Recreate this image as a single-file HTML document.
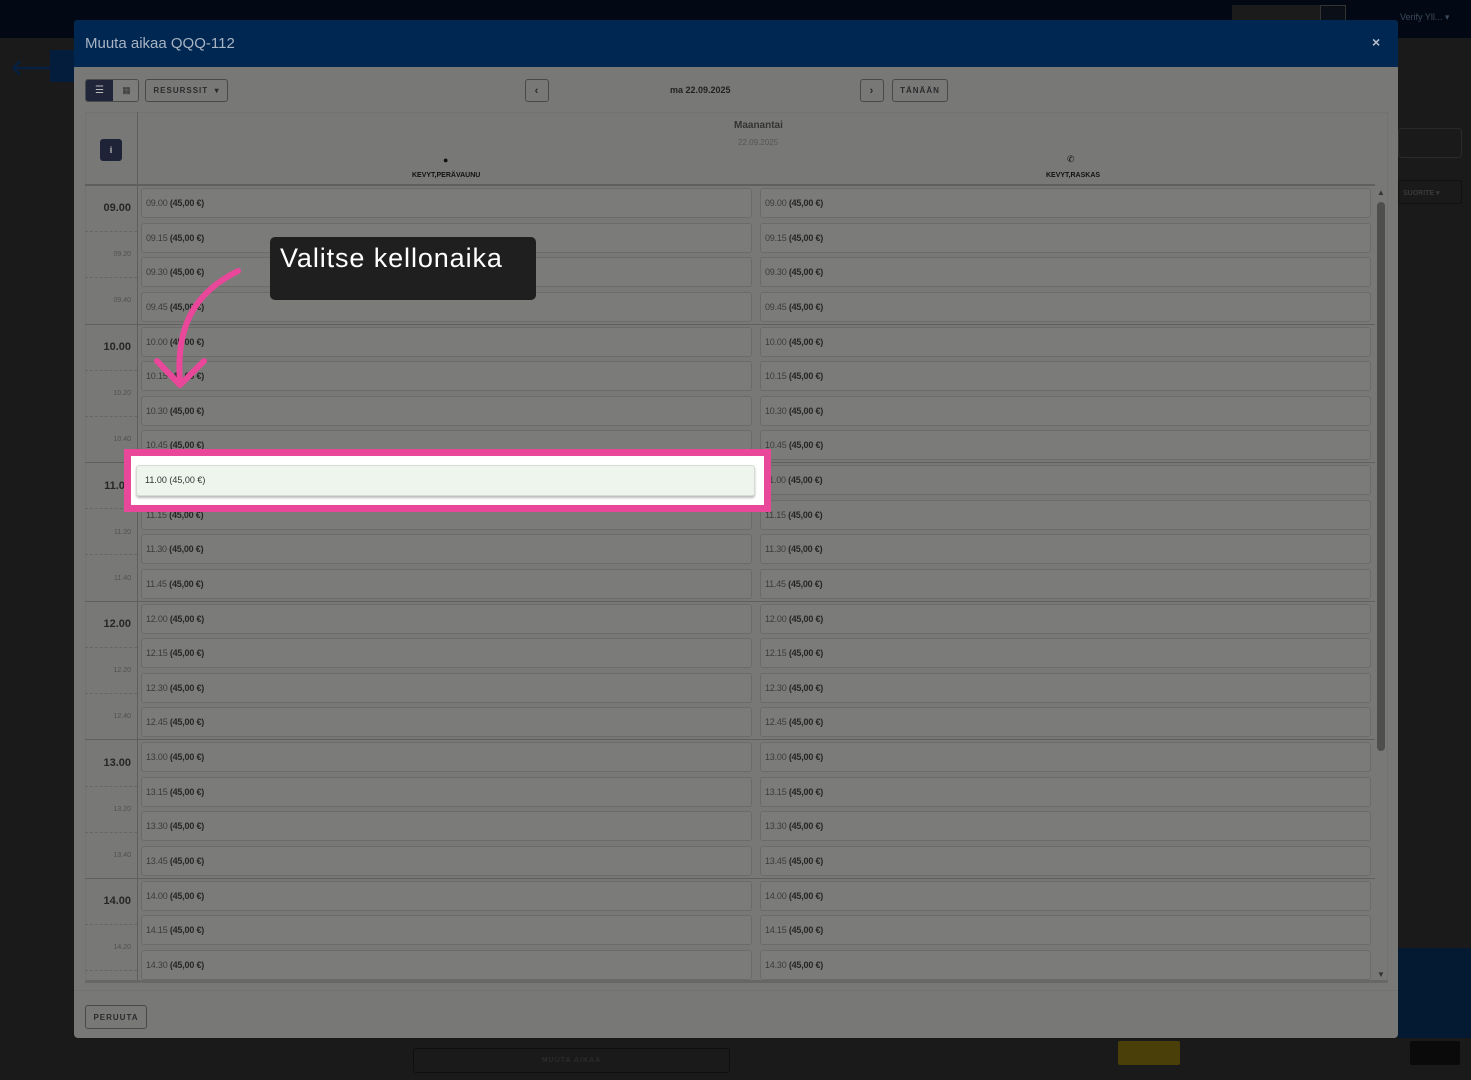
<!DOCTYPE html>
<html><head><meta charset="utf-8">
<style>
*{box-sizing:border-box;margin:0;padding:0}
body{width:1471px;height:1080px;overflow:hidden;background:#1a1a1b;font-family:"Liberation Sans",sans-serif;position:relative}
.a{position:absolute}
.nav{left:0;top:0;width:1471px;height:38px;background:#020914}
.modal{left:74px;top:20px;width:1324px;height:1018px;background:#787977;border-radius:4px;overflow:hidden}
.hdr{left:0;top:0;width:1324px;height:47px;background:#002752}
.btn{border:1px solid #48494b;border-radius:3px;font-size:8px;font-weight:bold;letter-spacing:1px;color:#2a2b2d;display:flex;align-items:center;justify-content:center}
.rows{display:flex;flex-direction:column}
.r{height:30px;margin-bottom:4.64px;border:1px solid #6b6c6a;border-radius:3px;background:#7b7c7a;font-size:9px;color:#3a3b3a;padding-left:4px;line-height:28px;white-space:nowrap;letter-spacing:-0.2px}
.r b{color:#262626}
.hl{font-size:11px;font-weight:bold;color:#262626;width:46px;text-align:right}
.sl{font-size:7px;color:#505050;width:46px;text-align:right}
</style></head><body>
<div class="a nav"></div>
<div class="a" style="left:1232px;top:5px;width:88px;height:22px;background:#1b1b1c"></div>
<div class="a" style="left:1320px;top:5px;width:26px;height:22px;background:#0a0f18;border:1px solid #333"></div>
<div class="a" style="left:1400px;top:12px;color:#3d4a5c;font-size:9px">Verify Yll... ▾</div>
<div class="a" style="left:10px;top:55px;color:#08203f;font-size:22px;font-weight:bold">🡐</div>
<div class="a" style="left:50px;top:50px;width:24px;height:32px;background:#041d3c"></div>
<div class="a" style="left:1398px;top:128px;width:64px;height:30px;border:1px solid #2a2a2a;border-radius:4px"></div>
<div class="a" style="left:1398px;top:180px;width:64px;height:24px;border:1px solid #111;border-radius:3px;color:#3a3a3a;font-size:7px;font-weight:bold;padding:8px 4px">SUORITE ▾</div>
<div class="a" style="left:1398px;top:948px;width:73px;height:90px;background:#041a33"></div>
<div class="a" style="left:1118px;top:1041px;width:62px;height:24px;background:#4a3f08;border-radius:2px"></div>
<div class="a" style="left:1410px;top:1041px;width:50px;height:24px;background:#0a0a0a;border-radius:2px"></div>
<div class="a" style="left:413px;top:1048px;width:317px;height:25px;border:1px solid #0f0f0f;border-radius:3px;font-size:7px;color:#2c2c2c;text-align:center;line-height:24px;font-weight:bold;letter-spacing:1px">MUUTA AIKAA</div>

<div class="a modal">
 <div class="a hdr"><div class="a" style="left:11px;top:15px;color:#a9b4c2;font-size:15px">Muuta aikaa QQQ-112</div><div class="a" style="left:1298px;top:14px;color:#b8bfca;font-size:14px;font-weight:bold">×</div></div>
 <div class="a" style="left:11px;top:59px;width:54px;height:23px;border:1px solid #4a4b4d;border-radius:3px;overflow:hidden">
  <div class="a" style="left:0;top:0;width:27px;height:23px;background:#20253a;color:#bbb;font-size:10px;text-align:center;line-height:21px">☰</div>
  <div class="a" style="left:27px;top:0;width:27px;height:23px;background:#7c7d7b;color:#333;font-size:9px;text-align:center;line-height:21px">▦</div>
 </div>
 <div class="a btn" style="left:71px;top:59px;width:83px;height:23px">RESURSSIT &nbsp;▾</div>
 <div class="a btn" style="left:451px;top:59px;width:24px;height:23px;font-size:11px">‹</div>
 <div class="a" style="left:596px;top:65px;font-size:9px;font-weight:bold;color:#222">ma 22.09.2025</div>
 <div class="a btn" style="left:786px;top:59px;width:24px;height:23px;font-size:11px">›</div>
 <div class="a btn" style="left:818px;top:59px;width:56px;height:23px">TÄNÄÄN</div>
 <div class="a" style="left:11px;top:92px;width:1303px;height:870px;border:1px solid #727371;background:#787977"></div>
 <div class="a" style="left:63px;top:92px;width:1px;height:870px;background:#5e5f5d"></div>
 <div class="a" style="left:26px;top:119px;width:22px;height:22px;background:#1f2338;border-radius:3px;color:#bbb;font-size:9px;font-weight:bold;text-align:center;line-height:22px">i</div>
 <div class="a" style="left:660px;top:100px;font-size:10px;font-weight:bold;color:#333">Maanantai</div>
 <div class="a" style="left:664px;top:118px;font-size:8px;color:#555">22.09.2025</div>
 <div class="a" style="left:369px;top:135px;font-size:9px;color:#111">●</div>
 <div class="a" style="left:338px;top:152px;font-size:7px;font-weight:bold;color:#111">KEVYT,PERÄVAUNU</div>
 <div class="a" style="left:993px;top:134px;font-size:9px;color:#111">✆</div>
 <div class="a" style="left:972px;top:152px;font-size:7px;font-weight:bold;color:#111">KEVYT,RASKAS</div>
 <div class="a" style="left:11px;top:164px;width:1290px;height:2px;background:#5f605e"></div>
 <div class="a" style="left:11px;top:303.6px;width:1290px;height:1px;background:#5f605e"></div>
 <div class="a" style="left:11px;top:442.2px;width:1290px;height:1px;background:#5f605e"></div>
 <div class="a" style="left:11px;top:580.8px;width:1290px;height:1px;background:#5f605e"></div>
 <div class="a" style="left:11px;top:719.4px;width:1290px;height:1px;background:#5f605e"></div>
 <div class="a" style="left:11px;top:858px;width:1290px;height:1px;background:#5f605e"></div>
 <div class="a" style="left:11px;top:211px;width:52px;border-top:1px dashed #666"></div>
 <div class="a" style="left:11px;top:257px;width:52px;border-top:1px dashed #666"></div>
 <div class="a" style="left:11px;top:350px;width:52px;border-top:1px dashed #666"></div>
 <div class="a" style="left:11px;top:396px;width:52px;border-top:1px dashed #666"></div>
 <div class="a" style="left:11px;top:488px;width:52px;border-top:1px dashed #666"></div>
 <div class="a" style="left:11px;top:534px;width:52px;border-top:1px dashed #666"></div>
 <div class="a" style="left:11px;top:627px;width:52px;border-top:1px dashed #666"></div>
 <div class="a" style="left:11px;top:673px;width:52px;border-top:1px dashed #666"></div>
 <div class="a" style="left:11px;top:766px;width:52px;border-top:1px dashed #666"></div>
 <div class="a" style="left:11px;top:812px;width:52px;border-top:1px dashed #666"></div>
 <div class="a" style="left:11px;top:904px;width:52px;border-top:1px dashed #666"></div>
 <div class="a" style="left:11px;top:950px;width:52px;border-top:1px dashed #666"></div>
 <div class="a hl" style="left:11px;top:182px">09.00</div>
 <div class="a sl" style="left:11px;top:231px">09.20</div>
 <div class="a sl" style="left:11px;top:277px">09.40</div>
 <div class="a hl" style="left:11px;top:321px">10.00</div>
 <div class="a sl" style="left:11px;top:370px">10.20</div>
 <div class="a sl" style="left:11px;top:416px">10.40</div>
 <div class="a hl" style="left:11px;top:460px">11.00</div>
 <div class="a sl" style="left:11px;top:509px">11.20</div>
 <div class="a sl" style="left:11px;top:555px">11.40</div>
 <div class="a hl" style="left:11px;top:598px">12.00</div>
 <div class="a sl" style="left:11px;top:647px">12.20</div>
 <div class="a sl" style="left:11px;top:693px">12.40</div>
 <div class="a hl" style="left:11px;top:737px">13.00</div>
 <div class="a sl" style="left:11px;top:786px">13.20</div>
 <div class="a sl" style="left:11px;top:832px">13.40</div>
 <div class="a hl" style="left:11px;top:875px">14.00</div>
 <div class="a sl" style="left:11px;top:924px">14.20</div>
 <div class="a" style="left:0;top:166px;width:1310px;height:794px;overflow:hidden">
 <div class="a rows" style="left:67px;top:2px;width:611px">
  <div class="r">09.00 <b>(45,00 €)</b></div><div class="r">09.15 <b>(45,00 €)</b></div><div class="r">09.30 <b>(45,00 €)</b></div><div class="r">09.45 <b>(45,00 €)</b></div>
  <div class="r">10.00 <b>(45,00 €)</b></div><div class="r">10.15 <b>(45,00 €)</b></div><div class="r">10.30 <b>(45,00 €)</b></div><div class="r">10.45 <b>(45,00 €)</b></div>
  <div class="r">11.00 <b>(45,00 €)</b></div><div class="r">11.15 <b>(45,00 €)</b></div><div class="r">11.30 <b>(45,00 €)</b></div><div class="r">11.45 <b>(45,00 €)</b></div>
  <div class="r">12.00 <b>(45,00 €)</b></div><div class="r">12.15 <b>(45,00 €)</b></div><div class="r">12.30 <b>(45,00 €)</b></div><div class="r">12.45 <b>(45,00 €)</b></div>
  <div class="r">13.00 <b>(45,00 €)</b></div><div class="r">13.15 <b>(45,00 €)</b></div><div class="r">13.30 <b>(45,00 €)</b></div><div class="r">13.45 <b>(45,00 €)</b></div>
  <div class="r">14.00 <b>(45,00 €)</b></div><div class="r">14.15 <b>(45,00 €)</b></div><div class="r">14.30 <b>(45,00 €)</b></div>
 </div>
 <div class="a rows" style="left:686px;top:2px;width:611px">
  <div class="r">09.00 <b>(45,00 €)</b></div><div class="r">09.15 <b>(45,00 €)</b></div><div class="r">09.30 <b>(45,00 €)</b></div><div class="r">09.45 <b>(45,00 €)</b></div>
  <div class="r">10.00 <b>(45,00 €)</b></div><div class="r">10.15 <b>(45,00 €)</b></div><div class="r">10.30 <b>(45,00 €)</b></div><div class="r">10.45 <b>(45,00 €)</b></div>
  <div class="r">11.00 <b>(45,00 €)</b></div><div class="r">11.15 <b>(45,00 €)</b></div><div class="r">11.30 <b>(45,00 €)</b></div><div class="r">11.45 <b>(45,00 €)</b></div>
  <div class="r">12.00 <b>(45,00 €)</b></div><div class="r">12.15 <b>(45,00 €)</b></div><div class="r">12.30 <b>(45,00 €)</b></div><div class="r">12.45 <b>(45,00 €)</b></div>
  <div class="r">13.00 <b>(45,00 €)</b></div><div class="r">13.15 <b>(45,00 €)</b></div><div class="r">13.30 <b>(45,00 €)</b></div><div class="r">13.45 <b>(45,00 €)</b></div>
  <div class="r">14.00 <b>(45,00 €)</b></div><div class="r">14.15 <b>(45,00 €)</b></div><div class="r">14.30 <b>(45,00 €)</b></div>
 </div>
 </div>
 <div class="a" style="left:1303px;top:168px;font-size:8px;color:#333">▲</div>
 <div class="a" style="left:1303px;top:182px;width:8px;height:549px;background:#4e4f4d;border-radius:4px"></div>
 <div class="a" style="left:1303px;top:950px;font-size:8px;color:#333">▼</div>
 <div class="a" style="left:11px;top:960px;width:1303px;height:3px;background:#676866"></div>
 <div class="a" style="left:0;top:970px;width:1324px;height:1px;background:#727371"></div>
 <div class="a btn" style="left:11px;top:985px;width:62px;height:24px">PERUUTA</div>
</div>

<div class="a" style="left:124px;top:449px;width:647px;height:63px;border:7px solid #e8479a;background:#fff"></div>
<div class="a" style="left:136px;top:465px;width:619px;height:31px;background:#edf5ed;border:1px solid #d5dcd5;border-radius:3px;box-shadow:0 2px 2px #bbb;font-size:9px;color:#333;padding-left:8px;line-height:29px">11.00 (45,00 €)</div>

<div class="a" style="left:270px;top:237px;width:266px;height:63px;background:#1f1f1f;border-radius:5px"></div>
<div class="a" style="left:280px;top:243px;color:#fff;font-size:27px;letter-spacing:0.9px">Valitse kellonaika</div>
<svg class="a" style="left:0;top:0" width="1471" height="1080"><path d="M238 271 C200 290 175 320 180 382" stroke="#e8479a" stroke-width="6" fill="none" stroke-linecap="round"/><path d="M157 361 L180 385 L204 361" stroke="#e8479a" stroke-width="6" fill="none" stroke-linecap="round" stroke-linejoin="round"/></svg>
</body></html>
